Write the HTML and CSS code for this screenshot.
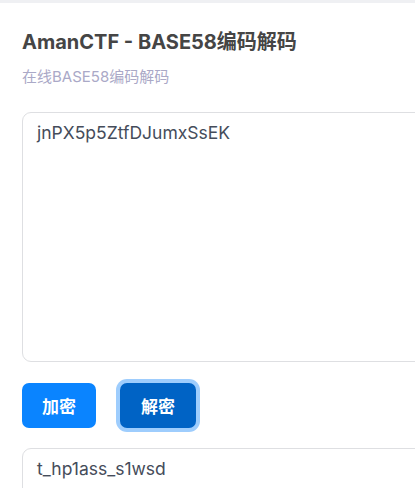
FILE: index.html
```html
<!DOCTYPE html>
<html lang="zh">
<head>
<meta charset="utf-8">
<title>AmanCTF - BASE58编码解码</title>
<link rel="stylesheet" href="styles.css">
</head>
<body>
<div class="topbar"></div>
<main class="page">
  <h1 class="title">AmanCTF - BASE58编码解码</h1>
  <p class="subtitle">在线BASE58编码解码</p>
  <textarea class="box box-input">jnPX5p5ZtfDJumxSsEK</textarea>
  <div class="actions">
    <button class="btn">加密</button>
    <button class="btn btn-active">解密</button>
  </div>
  <textarea class="box box-output">t_hp1ass_s1wsd</textarea>
</main>
</body>
</html>
```
FILE: styles.css
```css
html, body {
  margin: 0;
  padding: 0;
  background: #ffffff;
  font-family: Inter, "Noto Sans CJK SC", sans-serif;
  overflow: hidden;
}
.topbar {
  height: 3px;
  background: #eff0f3;
}
.page {
  padding: 25px 0 0 22px;
  width: 440px;
}
.title {
  margin: 0;
  font-size: 20px;
  line-height: 28px;
  font-weight: 700;
  color: #454545;
}
.subtitle {
  margin: 11px 0 0;
  font-size: 15px;
  line-height: 20px;
  color: #aaa9c7;
}
.box {
  display: block;
  box-sizing: border-box;
  width: 440px;
  margin: 0;
  border: 1px solid #dedfe2;
  border-radius: 9px;
  padding: 7px 14px;
  font-family: Inter, "Noto Sans CJK SC", sans-serif;
  font-size: 17.5px;
  line-height: 26px;
  color: #454c5a;
  background: #fff;
  resize: none;
  outline: none;
}
.box-input {
  margin-top: 25px;
  height: 250px;
}
.actions {
  display: flex;
  gap: 24px;
  margin: 21px 0 20px;
}
.btn {
  height: 45px;
  width: 74px;
  border: none;
  border-radius: 7px;
  background: #0a84ff;
  color: #fff;
  font-family: Inter, "Noto Sans CJK SC", sans-serif;
  font-size: 17px;
  font-weight: 700;
  padding: 0;
}
.btn-active {
  width: 76px;
  background: #0063c5;
  box-shadow: 0 0 0 4px #9ecdfd;
}
.box-output {
  height: 80px;
}
```
